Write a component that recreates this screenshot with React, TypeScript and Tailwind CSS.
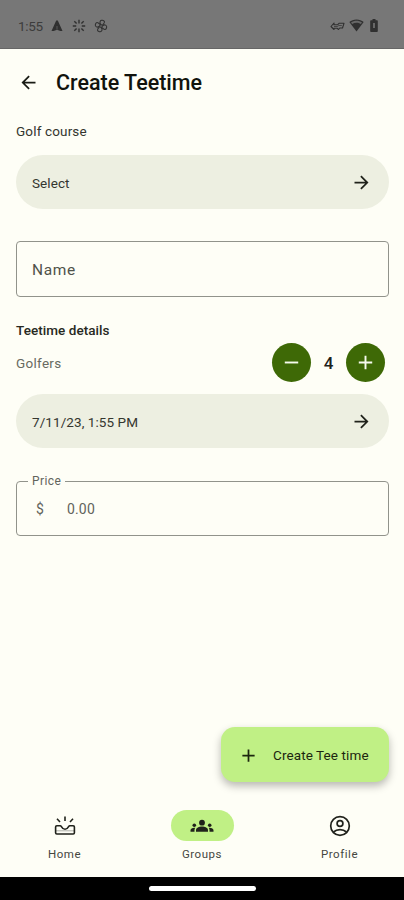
import type { ReactNode } from "react";
import { MdAdd, MdArrowBack, MdArrowForward, MdRemove } from "react-icons/md";

function StatusBar() {
  return (
    <div className="flex h-[49px] shrink-0 items-center border-b border-[#666] bg-[#777] pt-[3px] pr-[26px] pl-[18px] text-[#303030]">
      <span className="w-[33px] text-[13.5px] leading-4 tracking-[-0.3px] text-[#3c3c3c]">1:55</span>
      <svg className="h-3 w-3" viewBox="0 0 12 12" fill="currentColor">
        <path d="M5.200.5h1.600l4.700 10.500H9.300L6 9.700 2.700 11H.5z" />
        <path d="M6 6v3.500" stroke="#777" strokeWidth=".6" />
      </svg>
      <svg className="ml-[9px] h-[14px] w-[14px]" viewBox="0 0 14 14" fill="none" stroke="currentColor" strokeWidth="1.400">
        <path d="M7 .8v3.700M7 9.500v3.700M.8 7h3.400M9.800 7h3.400M2.300 2.300l2.300 2.300M9.400 9.400l2.300 2.300M2.300 11.700l2.300-2.300M9.400 4.600l2.300-2.300" />
      </svg>
      <svg className="ml-[8px] h-[14px] w-[14px]" viewBox="0 0 24 24" fill="none" stroke="currentColor" strokeWidth="1.800">
        <g transform="rotate(15 12 12)">
          <circle cx="12" cy="12" r="2.300" />
          <path d="M11 9.500C7 7 8 2 12 2s6 2 2 7.500M14.500 11C17 7 22 8 22 12s-2 6-7.500 2M13 14.500C17 17 16 22 12 22s-6-2-2-7.500M9.500 13C7 17 2 16 2 12s2-6 7.500-2" />
        </g>
      </svg>
      <svg className="ml-auto h-[10px] w-[15px]" viewBox="0 0 15 10" fill="none" stroke="currentColor" strokeWidth="1.100">
        <path d="M1 5.500 4 2v1.800h3.500L9 2.300h5L12.500 7H9.700L8.500 8.500 7 7.200H4v1.300z" strokeLinejoin="round" />
        <path d="M4 5.500h3.500l1.300-1h3" strokeWidth=".7" />
      </svg>
      <svg className="ml-[4px] h-[13px] w-[15px]" viewBox="0 0 15 13" fill="currentColor">
        <path d="M7.500.5C10.300.5 12.800 1.500 14.700 3L7.500 12.500.3 3C2.200 1.500 4.700.5 7.500.5z" />
        <path d="M2 3.500c3.300-2.300 7.700-2.300 11 0l-1.200 1.600c-2.600-1.900-6-1.900-8.600 0z" fill="#686868" />
      </svg>
      <svg className="ml-[6px] h-[13px] w-[8px]" viewBox="0 0 8 13" fill="currentColor">
        <path d="M2.500 0h3v1.300H7c.5 0 .8.300.8.800v10c0 .5-.3.900-.8.900H1c-.5 0-.8-.4-.8-.9v-10c0-.5.300-.8.800-.8h1.500z" />
        <path d="M3.200 4h1.600v5H3.200z" fill="#777" />
      </svg>
    </div>
  );
}

function PickerButton({ children }: { children: ReactNode }) {
  return (
    <button className="flex h-[54px] w-full items-center justify-between rounded-full bg-[#edefe1] pr-[17px] pl-4 text-[13.5px] font-[450] tracking-[0.08px] text-[#34362f]">
      <span className="pt-[2px]">{children}</span>
      <MdArrowForward className="h-[21px] w-[21px] text-[#20221b]" />
    </button>
  );
}

function RoundButton({ label, children }: { label: string; children: ReactNode }) {
  return (
    <button aria-label={label} className="flex h-[39px] w-[39px] items-center justify-center rounded-full bg-[#3e6906] text-[#f6faee]">
      {children}
    </button>
  );
}

function SunriseIcon() {
  return (
    <svg className="h-5 w-[22px]" viewBox="0 0 22 20" fill="none" stroke="currentColor" strokeWidth="1.600">
      <path d="M11 .5v4.500M3 2.800l3 3.200M19 2.800 16 6" />
      <path d="M2.800 9.800h3.400c.6 0 .9.300 1.200.8.900 1.700 2 2.600 3.600 2.600s2.700-.9 3.600-2.600c.3-.5.600-.8 1.200-.8h3.400c.8 0 1.200.4 1.200 1.200v5.800c0 .8-.4 1.200-1.200 1.200H2.800c-.8 0-1.200-.4-1.200-1.200V11c0-.8.400-1.200 1.200-1.200z" />
      <path d="M2 14.800h18" strokeWidth=".8" opacity=".45" />
    </svg>
  );
}

function GroupsIcon() {
  return (
    <svg className="h-6 w-6" viewBox="0 0 24 24" fill="currentColor">
      <circle cx="12" cy="8.700" r="2.900" />
      <path d="M6 17.800v-1.600c0-2.300 3-3.600 6-3.600s6 1.300 6 3.600v1.600z" />
      <circle cx="4.300" cy="11.200" r="1.800" />
      <circle cx="19.700" cy="11.200" r="1.800" />
      <path d="M.5 17.800v-1.500c0-1.700 2-2.700 4.700-2.500-.5.700-.7 1.500-.7 2.400v1.600zM23.500 17.800v-1.500c0-1.700-2-2.700-4.700-2.500.5.700.7 1.500.7 2.400v1.600z" />
    </svg>
  );
}

function ProfileIcon() {
  return (
    <svg className="h-[22px] w-[22px]" viewBox="0 0 22 22" fill="none" stroke="currentColor" strokeWidth="1.700">
      <circle cx="11" cy="11" r="9.300" />
      <circle cx="11" cy="8.500" r="2.900" />
      <path d="M4.500 17c3.600-3.200 9.400-3.200 13 0" />
    </svg>
  );
}

function NavItem({ label, active = false, children }: { label: string; active?: boolean; children: ReactNode }) {
  return (
    <div className="flex w-[137.5px] shrink-0 flex-col items-center text-[#20221b]">
      <div className={active ? "flex h-[31px] w-[63px] items-center justify-center rounded-full bg-[#c0f085]" : "flex h-[31px] w-[63px] items-center justify-center"}>
        {children}
      </div>
      <span className="mt-[5px] text-[11.5px] leading-4 font-[450] tracking-[0.55px] text-[#45473f]">{label}</span>
    </div>
  );
}

export default function App() {
  return (
    <div className="flex h-[900px] w-[404px] flex-col overflow-hidden bg-[#fefef6] font-['Roboto','Liberation_Sans',sans-serif]">
      <StatusBar />
      <header className="flex h-[66px] shrink-0 items-center pl-[18px] text-[#191b14]">
        <MdArrowBack className="h-[21px] w-[21px]" />
        <h1 className="ml-[17px] pt-[2px] text-[21.5px] leading-7 font-medium text-[#11130c]">Create Teetime</h1>
      </header>
      <main className="flex flex-col pr-[15px] pl-4">
        <h2 className="mt-[6px] mb-[14px] text-[13.5px] leading-5 font-[450] tracking-[0.15px] text-[#34362f]">Golf course</h2>
        <PickerButton>Select</PickerButton>
        <div className="mt-[32px] flex h-[56px] items-center rounded-[4px] border border-[#91938b] pt-[3px] pl-[15px] text-[15.500px] tracking-[0.6px] text-[#50524a]">
          Name
        </div>
        <h2 className="mt-[23px] text-[13.5px] leading-5 font-[480] tracking-[0.05px] text-[#272922]">Teetime details</h2>
        <div className="mt-[3px] flex h-[39px] items-center pr-[4px]">
          <span className="mt-px mr-auto text-[13.5px] tracking-[0.3px] text-[#686a61]">Golfers</span>
          <RoundButton label="Remove golfer"><MdRemove className="h-[23px] w-[23px] stroke-current" /></RoundButton>
          <span className="mt-[2px] w-[35px] text-center text-[17px] font-medium text-[#20221b]">4</span>
          <RoundButton label="Add golfer"><MdAdd className="h-[23px] w-[23px] stroke-current" /></RoundButton>
        </div>
        <div className="mt-[12px]"><PickerButton>7/11/23, 1:55 PM</PickerButton></div>
        <fieldset className="mt-[25px] h-[63px] rounded-[4px] border border-[#91938b] pl-[11px] text-[#62645c]">
          <legend className="px-1 text-[12px] leading-4 tracking-[0.4px]">Price</legend>
          <div className="flex pt-[10px] pl-[8px] text-[14px] leading-5 tracking-[0.15px]">
            <span className="w-[31px]">$</span>
            <span>0.00</span>
          </div>
        </fieldset>
      </main>
      <button className="mt-auto mr-[15px] flex h-[55px] w-[168px] shrink-0 items-center self-end rounded-[14px] bg-[#c0f085] pt-px pl-[17px] text-[13.5px] font-[450] text-[#1c260f] shadow-[0_4px_8px_rgba(0,0,0,0.28)]">
        <MdAdd className="h-[21px] w-[21px]" />
        <span className="ml-[14px] tracking-[0.1px]">Create Tee time</span>
      </button>
      <nav className="mt-[28px] flex h-[67px] shrink-0 justify-center">
        <NavItem label="Home"><SunriseIcon /></NavItem>
        <NavItem label="Groups" active><GroupsIcon /></NavItem>
        <NavItem label="Profile"><ProfileIcon /></NavItem>
      </nav>
      <div className="flex h-[23px] shrink-0 justify-center bg-black pt-[9px]">
        <div className="h-[5px] w-[107px] rounded-full bg-white" />
      </div>
    </div>
  );
}
